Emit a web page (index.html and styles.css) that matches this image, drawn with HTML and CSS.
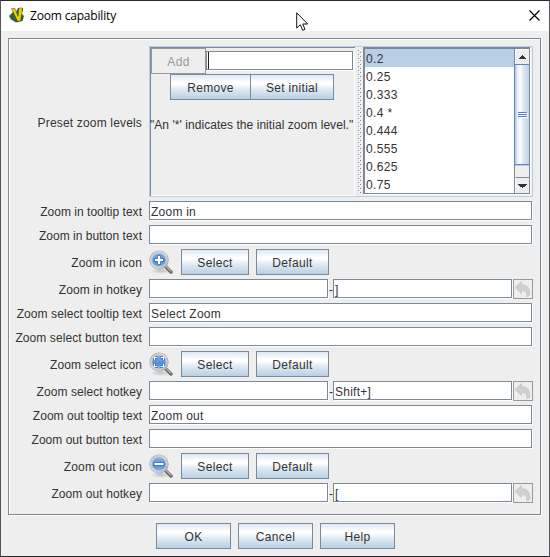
FILE: index.html
```html
<!DOCTYPE html>
<html lang="en">
<head>
<meta charset="utf-8">
<title>Zoom capability</title>
<link rel="stylesheet" href="styles.css">
</head>
<body>
<svg class="defs" width="0" height="0" aria-hidden="true">
  <defs>
    <linearGradient id="lens" x1="0" y1="0" x2="0" y2="1">
      <stop offset="0" stop-color="#92b7e8"/><stop offset=".48" stop-color="#6496dc"/><stop offset=".55" stop-color="#5088d8"/><stop offset="1" stop-color="#93c2f7"/>
    </linearGradient>
    <linearGradient id="rim" x1="0" y1="0" x2="1" y2="1">
      <stop offset="0" stop-color="#c2c3be"/><stop offset=".5" stop-color="#dcddd8"/><stop offset="1" stop-color="#aaaca7"/>
    </linearGradient>
    <radialGradient id="shade"><stop offset="0" stop-color="#888" stop-opacity=".45"/><stop offset="1" stop-color="#888" stop-opacity="0"/></radialGradient>
    <symbol id="glass" viewBox="0 0 24 24">
      <ellipse cx="12" cy="21" rx="11" ry="3" fill="url(#shade)"/>
      <path d="M16.500 16.500L22 22" stroke="#6a6c68" stroke-width="3.400" stroke-linecap="round"/>
      <path d="M16.500 15.800L21.800 21" stroke="#b0b2ad" stroke-width="1.300" stroke-linecap="round"/>
      <circle cx="10" cy="10" r="8.500" fill="url(#lens)" stroke="#9b9d98" stroke-width="2.200"/>
      <circle cx="10" cy="10" r="8.400" fill="none" stroke="url(#rim)" stroke-width="1.600"/>
      <circle cx="10" cy="10" r="7.200" fill="none" stroke="#d8e5f5" stroke-width=".8"/>
    </symbol>
    <symbol id="undo" viewBox="0 0 18 18">
      <path d="M1 7.500L7.500 1.500V4.800C13 4.500 16.800 8.300 15.600 15.500L12.500 16.500C13.600 12.500 11.500 10.500 7.500 10.600V13.500Z" fill="#d0d0d0" stroke="#c4c4c4" stroke-width=".8"/>
    </symbol>
  </defs>
</svg>
<div class="window">
  <header class="title">
    <svg class="logo" width="16" height="16" viewBox="0 0 16 16">
      <path d="M0 9L4 5H7L9 1H14V4L12 6L15 9L13.500 14L7 15.500L2 12.500Z" fill="#37613c"/>
      <path d="M2.500 1.500H6L9 9.500L10 1H13.500L11.500 14H8.500Z" fill="#f2d500" stroke="#4a4a18" stroke-width=".5"/>
    </svg>
    <h1>Zoom capability</h1>
    <svg class="close" width="11" height="11" viewBox="0 0 11 11"><path d="M.5 .5L10.500 10.500M10.500 .5L.5 10.500" stroke="#000" stroke-width="1.150"/></svg>
    <svg class="cursor" width="13" height="20" viewBox="0 0 13 20"><path d="M.7 .8V16L4.300 12.800L6.700 18.300L9 17.300L6.700 12H11.700Z" fill="#fff" stroke="#15151d" stroke-width="1"/></svg>
  </header>
  <main class="panel">
    <div class="row">
      <div class="label">Preset zoom levels</div>
      <div class="split">
        <div class="editor">
          <div class="line first"><button class="btn add" disabled>Add</button><div class="field entry"><i class="caret"></i></div></div>
          <div class="line second"><button class="btn remove">Remove</button><button class="btn initial">Set initial</button></div>
          <p class="note">"An '*' indicates the initial zoom level."</p>
        </div>
        <div class="divider"><svg width="4" height="143"><defs><pattern id="dots" width="4" height="4" patternUnits="userSpaceOnUse"><path d="M0 0h1v1h-1zM2 2h1v1h-1z" fill="#7a8a99"/><path d="M1 1h1v1h-1zM3 3h1v1h-1z" fill="#fff"/></pattern></defs><rect width="4" height="143" fill="url(#dots)"/></svg></div>
        <div class="listbox">
          <ul class="list"><li class="selected">0.2</li><li>0.25</li><li>0.333</li><li>0.4 *</li><li>0.444</li><li>0.555</li><li>0.625</li><li>0.75</li></ul>
          <div class="scroll">
            <div class="arrow up"><svg width="7" height="4"><path d="M3 0h1v1h1v1h1v1h1v1H0V3h1V2h1V1h1z" fill="#333"/></svg></div>
            <div class="thumb"><i></i><i></i><i></i></div>
            <div class="track"></div>
            <div class="arrow down"><svg width="9" height="4"><path d="M0 0h9v1H8v1H7v1H5v1H4V3H2V2H1V1H0z" fill="#333"/></svg></div>
          </div>
        </div>
      </div>
    </div>
    <div class="row"><div class="label tight">Zoom in tooltip text</div><div class="field wide">Zoom in</div></div>
    <div class="row"><div class="label tight">Zoom in button text</div><div class="field wide"></div></div>
    <div class="row tall"><div class="label">Zoom in icon</div><div class="choice"><svg class="icon" width="24" height="24" viewBox="0 0 24 24"><use href="#glass"/><path d="M8.500 5.500h3v3h3v3h-3v3h-3v-3h-3v-3h3z" fill="#fff" stroke="#3566ad" stroke-width=".8"/></svg><button class="btn select">Select</button><button class="btn default">Default</button></div></div>
    <div class="row"><div class="label snug">Zoom in hotkey</div><div class="hotkey"><div class="field"></div><span class="dash">-</span><div class="field">]</div><button class="undo" disabled><svg width="18" height="18"><use href="#undo"/></svg></button></div></div>
    <div class="row"><div class="label snug">Zoom select tooltip text</div><div class="field wide">Select Zoom</div></div>
    <div class="row"><div class="label snug">Zoom select button text</div><div class="field wide"></div></div>
    <div class="row tall"><div class="label snug">Zoom select icon</div><div class="choice"><svg class="icon" width="24" height="24" viewBox="0 0 24 24"><use href="#glass"/><path d="M5.500 8.500V7L7 5.500H8.500M11.500 5.500H13L14.500 7V8.500M14.500 11.500V13L13 14.500H11.500M8.500 14.500H7L5.500 13V11.500" fill="none" stroke="#3566ad" stroke-width="2.400"/><path d="M5.500 8.300V5.500H8.300M11.700 5.500H14.500V8.300M14.500 11.700V14.500H11.700M8.300 14.500H5.500V11.700" fill="none" stroke="#fff" stroke-width="1.100"/></svg><button class="btn select">Select</button><button class="btn default">Default</button></div></div>
    <div class="row"><div class="label snug">Zoom select hotkey</div><div class="hotkey"><div class="field"></div><span class="dash">-</span><div class="field">Shift+]</div><button class="undo" disabled><svg width="18" height="18"><use href="#undo"/></svg></button></div></div>
    <div class="row"><div class="label tight">Zoom out tooltip text</div><div class="field wide">Zoom out</div></div>
    <div class="row"><div class="label tight">Zoom out button text</div><div class="field wide"></div></div>
    <div class="row tall"><div class="label">Zoom out icon</div><div class="choice"><svg class="icon" width="24" height="24" viewBox="0 0 24 24"><use href="#glass"/><path d="M5 8.500h10v3H5z" fill="#fff" stroke="#3566ad" stroke-width=".8"/></svg><button class="btn select">Select</button><button class="btn default">Default</button></div></div>
    <div class="row"><div class="label snug">Zoom out hotkey</div><div class="hotkey"><div class="field"></div><span class="dash">-</span><div class="field">[</div><button class="undo" disabled><svg width="18" height="18"><use href="#undo"/></svg></button></div></div>
  </main>
  <footer class="actions"><button class="btn">OK</button><button class="btn">Cancel</button><button class="btn">Help</button></footer>
</div>
</body>
</html>
```
FILE: styles.css
```css
* { box-sizing: border-box; }
body { margin: 0; width: 550px; height: 557px; overflow: hidden; background: #eee; font: 12px/18px "Liberation Sans", Arial, sans-serif; letter-spacing: .17px; color: #333; }
.defs { position: absolute; }
.window { width: 550px; height: 557px; border: 1px solid #55545a; border-top-color: #29272b; border-bottom-color: #29292d; display: flex; flex-direction: column; }
.title { height: 30px; background: #fff; display: flex; align-items: center; padding: 0 9px 0 8px; position: relative; flex: none; }
.logo { margin-right: 5px; margin-top: -2px; }
h1 { margin: 0; flex: 1; font: 12px/16px "Open Sans", "Noto Sans", sans-serif; letter-spacing: -.18px; color: #000; }
.close { margin-top: -2px; }
.cursor { position: absolute; left: 295px; top: 11px; }
.panel { margin: 7px 0 0 7px; width: 533px; height: 477px; border: 1px solid #7a8a99; box-shadow: 1px 1px #fff, inset 1px 1px #fff; padding: 7px; display: flex; flex-direction: column; gap: 4px; flex: none; }
.row { display: grid; grid-template-columns: 126px 384px; column-gap: 7px; height: 20px; align-items: center; flex: none; }
.row:first-child { height: 151px; }
.tall { height: 26px; }
.label { display: flex; justify-content: flex-end; white-space: nowrap; padding-top: 2px; }
.snug { letter-spacing: .08px; }
.tight { letter-spacing: .02px; }
.field { height: 19px; margin-bottom: 1px; border: 1px solid #7a8a99; background: #fff; box-shadow: 1px 1px #fff; padding-left: 1px; line-height: 20px; letter-spacing: .24px; white-space: pre; }
.wide { width: 383px; }
.btn { height: 26px; padding: 1px 0 0; border: 1px solid #7a8a99; background: linear-gradient(#dde8f3 0, #fff 30%, #fff 38%, #dfe9f3 60%, #b8cfe5 100%); color: #333; font: 12px/18px "Liberation Sans", Arial, sans-serif; letter-spacing: .32px; flex: none; }
.choice, .hotkey { display: flex; align-items: center; }
.icon { margin-right: 8px; }
.select { width: 68px; margin-right: 7px; }
.default { width: 73px; }
.hotkey .field { width: 179px; }
.dash { width: 5px; padding: 1px 0 0 1px; }
.undo { width: 20px; height: 20px; margin-left: 1px; border: 1px solid #999; background: #eee; padding: 0; display: flex; }
.split { height: 151px; border: 1px solid #b8cfe5; display: flex; }
.editor { width: 205px; border: solid #7a8a99; border-width: 1px 0 0 1px; box-shadow: inset -1px -1px #fff; }
.line { display: flex; justify-content: center; }
.first { justify-content: flex-start; }
.second { margin-right: 2px; }
.add { width: 55px; background: #eee; border-color: #999; color: #999; }
.entry { width: 147px; margin-top: 3px; padding: 0 1px; }
.caret { display: block; width: 1px; height: 17px; background: #222; }
.remove { width: 81px; margin-right: -1px; }
.initial { width: 84px; }
.note { margin: 16px 0 0 -1px; white-space: nowrap; letter-spacing: .05px; }
.divider { width: 8px; padding: 3px 0 0 3px; }
.divider svg { display: block; }
.listbox { width: 167px; height: 147px; border: solid #7a8a99; border-width: 2px 1px 1px 2px; box-shadow: 1px 1px #fff; background: #fff; display: flex; }
.list { width: 149px; margin: 0; padding: 0; list-style: none; letter-spacing: .35px; }
.list li { height: 18px; line-height: 20px; padding-left: 1px; }
.selected { background: #b8cfe5; }
.scroll { width: 15px; height: 144px; border-left: 1px solid #7a8a99; display: flex; flex-direction: column; }
.arrow { background: #eee; display: flex; justify-content: center; align-items: center; border: 1px solid #fff; border-width: 1px 0 0 1px; }
.up { height: 15px; }
.down { height: 16px; border-top-color: #7a8a99; }
.thumb { height: 101px; border: 1px solid #6382bf; border-right-width: 0; margin-left: -1px; background: linear-gradient(90deg, #b8cfe5 0 1px, #e0eaf4 2px, #fff 5px, #dfe9f3 8px, #b8cfe5 15px); display: flex; flex-direction: column; align-items: center; justify-content: center; gap: 1px; }
.thumb i { width: 9px; height: 1px; background: #5a81c8; box-shadow: 1px 1px #fff; }
.track { height: 12px; border-top: 1px solid #b8cfe5; background: #eee; }
.actions { margin: 8px 0 0 155px; display: flex; gap: 7px; }
.actions .btn { width: 75px; }
```
